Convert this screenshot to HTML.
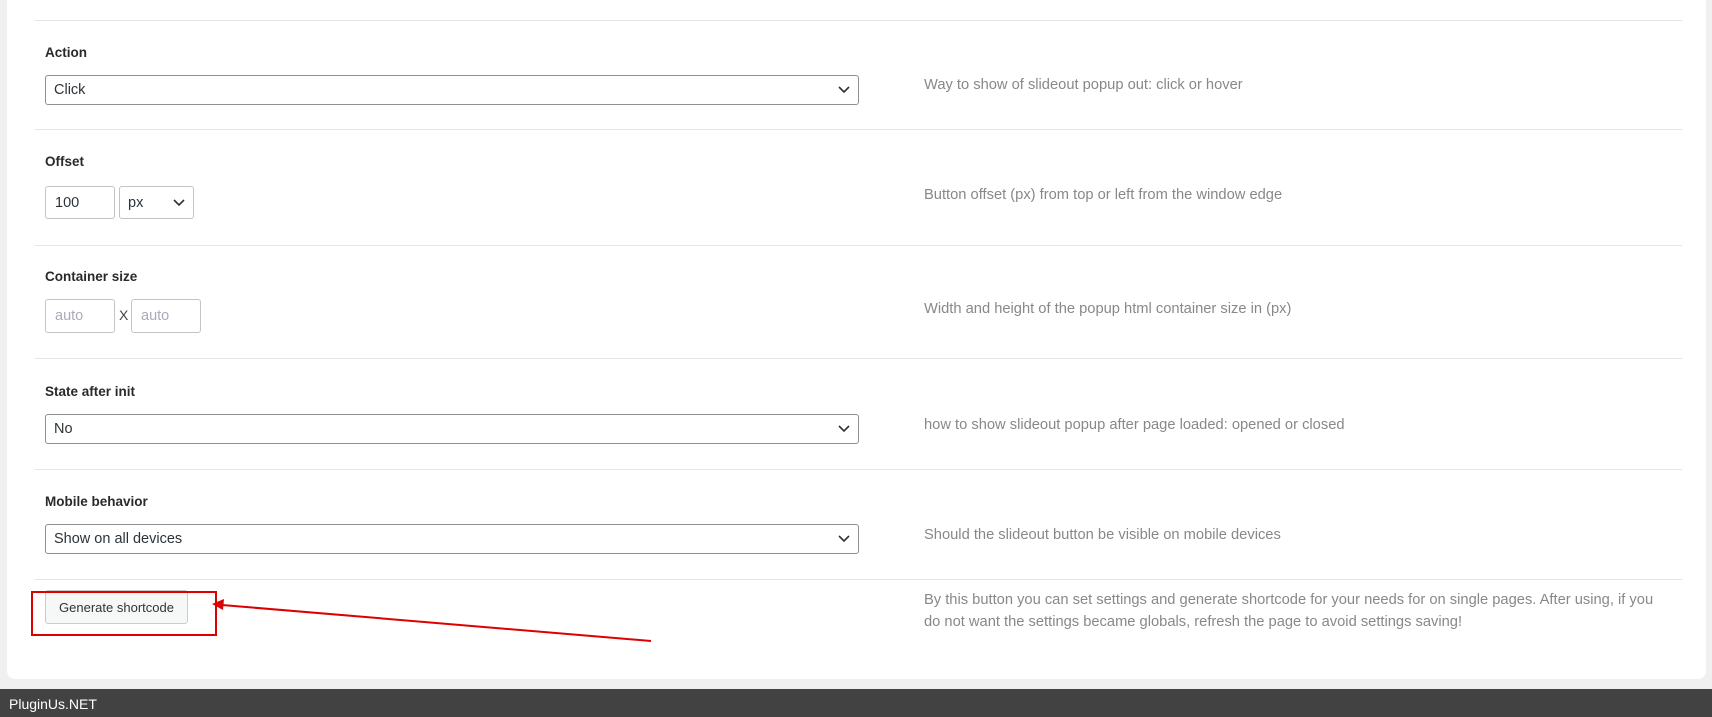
<!DOCTYPE html>
<html><head><meta charset="utf-8"><style>
*{box-sizing:border-box;margin:0;padding:0}
body{width:1712px;height:717px;background:#f0f0f1;font-family:"Liberation Sans",sans-serif;position:relative;overflow:hidden}
.card{position:absolute;left:7px;top:-10px;width:1699px;height:689px;background:#fff;border-radius:8px}
.sep{position:absolute;left:35px;width:1647px;height:1px;background:#e2e6ea}
.lbl{position:absolute;left:45px;font-size:13.5px;font-weight:bold;color:#2a2a2a}
.desc{position:absolute;left:924px;font-size:14.7px;color:#888;line-height:22px}
.sel{position:absolute;border:1px solid #8c8f94;border-radius:3px;background:#fff;font-size:14.5px;color:#2c3338;padding-left:8px;display:flex;align-items:center}
.sel svg{position:absolute;right:8px;top:50%;margin-top:-4px}
.inp{position:absolute;border:1px solid #c3c4c7;border-radius:3px;background:#fff;font-size:14.5px;color:#2c3338;padding-left:9px;display:flex;align-items:center}
.ph{color:#aab}
.foot{position:absolute;left:0;top:689px;width:1712px;height:28px;background:#424242;color:#fff;font-size:14px;padding:7px 9px}
</style></head><body>
<div class="card"></div>
<div class="sep" style="top:20px"></div>
<div class="lbl" style="top:45px">Action</div>
<div class="sel" style="left:45px;top:75px;width:814px;height:30px">Click<svg width="12" height="8"><path d="M1 1l5 5 5-5" stroke="#2c3338" stroke-width="1.6" fill="none"/></svg></div>
<div class="desc" style="top:74px">Way to show of slideout popup out: click or hover</div>
<div class="sep" style="top:129px"></div>
<div class="lbl" style="top:154px">Offset</div>
<div class="inp" style="left:45px;top:186px;width:70px;height:33px">100</div>
<div class="sel" style="left:119px;top:186px;width:75px;height:33px;border-color:#c3c4c7">px<svg width="12" height="8"><path d="M1 1l5 5 5-5" stroke="#2c3338" stroke-width="1.6" fill="none"/></svg></div>
<div class="desc" style="top:184px">Button offset (px) from top or left from the window edge</div>
<div class="sep" style="top:245px"></div>
<div class="lbl" style="top:269px">Container size</div>
<div class="inp ph" style="left:45px;top:299px;width:70px;height:34px">auto</div>
<div style="position:absolute;left:119px;top:307px;font-size:14px;color:#444">X</div>
<div class="inp ph" style="left:131px;top:299px;width:70px;height:34px">auto</div>
<div class="desc" style="top:298px">Width and height of the popup html container size in (px)</div>
<div class="sep" style="top:358px"></div>
<div class="lbl" style="top:384px">State after init</div>
<div class="sel" style="left:45px;top:414px;width:814px;height:30px">No<svg width="12" height="8"><path d="M1 1l5 5 5-5" stroke="#2c3338" stroke-width="1.6" fill="none"/></svg></div>
<div class="desc" style="top:414px">how to show slideout popup after page loaded: opened or closed</div>
<div class="sep" style="top:469px"></div>
<div class="lbl" style="top:494px">Mobile behavior</div>
<div class="sel" style="left:45px;top:524px;width:814px;height:30px">Show on all devices<svg width="12" height="8"><path d="M1 1l5 5 5-5" stroke="#2c3338" stroke-width="1.6" fill="none"/></svg></div>
<div class="desc" style="top:524px">Should the slideout button be visible on mobile devices</div>
<div class="sep" style="top:579px"></div>
<div style="position:absolute;left:45px;top:590px;width:143px;height:34px;border:1px solid #ccc;border-radius:3px;background:#f6f7f7;font-size:13px;color:#333;display:flex;align-items:center;justify-content:center">Generate shortcode</div>
<div class="desc" style="top:589px">By this button you can set settings and generate shortcode for your needs for on single pages. After using, if you<br>do not want the settings became globals, refresh the page to avoid settings saving!</div>
<svg style="position:absolute;left:0;top:0" width="1712" height="717">
<rect x="32" y="592" width="184" height="43" fill="none" stroke="#d00" stroke-width="2"/>
<line x1="651" y1="641" x2="222" y2="605" stroke="#d00" stroke-width="2"/>
<path d="M212 604l12-5-1 11z" fill="#d00"/>
</svg>
<div class="foot">PluginUs.NET</div>
</body></html>
